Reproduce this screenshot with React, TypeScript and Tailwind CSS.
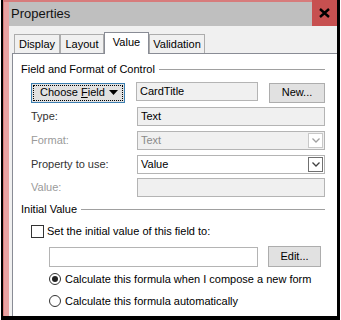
import React from "react";

const font = { fontFamily: "'Liberation Sans', Arial, sans-serif" };

const Field = ({
  className = "",
  children,
}: {
  className?: string;
  children?: React.ReactNode;
}) => (
  <div
    className={`h-[19px] border border-[#b4b4b4] bg-[#f0f0f0] px-[3px] flex items-center leading-none ${className}`}
  >
    {children}
  </div>
);

const Arrow = ({ light }: { light?: boolean }) => (
  <div
    className={`ml-auto w-[15px] h-[15px] border flex items-center justify-center bg-white ${
      light ? "border-[#c8c8c8]" : "border-[#707070]"
    }`}
  >
    <svg width="8" height="5" viewBox="0 0 8 5">
      <path
        d="M0.5 0.5 L4 4 L7.5 0.5"
        fill="none"
        stroke={light ? "#a0a0a0" : "#404040"}
        strokeWidth="1.3"
      />
    </svg>
  </div>
);

const Button = ({ label, className = "" }: { label: string; className?: string }) => (
  <div
    className={`h-[20px] border border-[#adadad] bg-[#e1e1e1] flex items-center justify-center ${className}`}
  >
    {label}
  </div>
);

const Tab = ({ label, width, active }: { label: string; width: string; active?: boolean }) => (
  <div
    className={`${width} flex items-center justify-center border border-b-0 ${
      active
        ? "h-[22px] bg-white border-[#898c95] relative -mb-px z-10"
        : "h-[19px] bg-[#f0f0f0] border-[#acacac]"
    }`}
  >
    <span className={active ? "-mt-[3px]" : ""}>{label}</span>
  </div>
);

const Radio = ({ checked }: { checked?: boolean }) => (
  <div className="w-[12px] h-[12px] shrink-0 rounded-full border border-[#333] bg-white flex items-center justify-center">
    {checked && <div className="w-[6px] h-[6px] rounded-full bg-[#222]" />}
  </div>
);

export default function App() {
  return (
    <div
      className="w-[341px] h-[320px] bg-white flex text-[#000] text-[11px] whitespace-nowrap"
      style={font}
    >
      <div className="w-px bg-white" />
      <div className="w-[2px] bg-black" />
      <div className="flex-1 flex flex-col">
        <div className="flex-1 flex flex-col border-t-2 border-l border-[#d77c7c]">
          <div className="flex-1 flex flex-col border-l-[5px] border-[#e8a2a2]">
            {/* title bar */}
            <div className="h-[24px] bg-[#bfbfbf] flex items-center relative">
              <span className="text-[13px] pl-[2px] text-[#111]">Properties</span>
              <div className="absolute right-0 -top-[2px] w-[25px] h-[26px] bg-[#c75050] flex items-center justify-center">
                <svg width="11" height="10" viewBox="0 0 11 10">
                  <path d="M1 1 L10 9 M10 1 L1 9" stroke="#000" strokeWidth="2.4" />
                </svg>
              </div>
            </div>
            {/* body */}
            <div className="flex-1 bg-[#f0f0f0] flex flex-col pl-[3px] pt-[7px]">
              <div className="flex items-end pl-[2px] h-[20px]">
                <Tab label="Display" width="w-[46px]" />
                <Tab label="Layout" width="w-[44px]" />
                <Tab label="Value" width="w-[45px]" active />
                <Tab label="Validation" width="w-[56px]" />
              </div>
              <div className="flex-1 bg-white border-l border-t border-[#898c95] pl-[8px] pr-[12px] pt-[8px]">
                <div className="flex items-center gap-[4px] h-[14px]">
                  <span>Field and Format of Control</span>
                  <div className="flex-1 h-px bg-[#a0a0a0]" />
                </div>
                <div className="pl-[10px] mt-[5px] flex flex-col">
                  <div className="flex items-center h-[23px]">
                    <div className="w-[94px] h-[20px] border border-[#3c7fb1] bg-[#e1e1e1] p-px">
                      <div className="w-full h-full border border-dotted border-black flex items-center pl-[6px] pr-[4px]">
                        <span>
                          Choose <span className="underline">F</span>ield
                        </span>
                        <svg className="ml-auto" width="9" height="5" viewBox="0 0 9 5">
                          <path d="M0 0 H9 L4.5 5 Z" fill="#000" />
                        </svg>
                      </div>
                    </div>
                    <Field className="ml-[11px] w-[122px] -mt-[2px]">CardTitle</Field>
                    <Button label="New..." className="ml-auto w-[56px]" />
                  </div>
                  <div className="flex items-center h-[24px]">
                    <span className="w-[106px] text-[#333]">Type:</span>
                    <Field className="flex-1">Text</Field>
                  </div>
                  <div className="flex items-center h-[24px]">
                    <span className="w-[106px] text-[#9a9a9a]">Format:</span>
                    <Field className="flex-1 border-[#a9c3de] text-[#8a8a8a] pr-px">
                      Text
                      <Arrow light />
                    </Field>
                  </div>
                  <div className="flex items-center h-[24px]">
                    <span className="w-[106px] text-[#333]">Property to use:</span>
                    <Field className="flex-1 bg-white border-[#b4b4b4] pr-px">
                      Value
                      <Arrow />
                    </Field>
                  </div>
                  <div className="flex items-center h-[22px]">
                    <span className="w-[106px] text-[#9a9a9a]">Value:</span>
                    <Field className="flex-1 border-[#a9c3de]" />
                  </div>
                </div>
                <div className="flex items-center gap-[4px] h-[14px] mt-[4px]">
                  <span>Initial Value</span>
                  <div className="flex-1 h-px bg-[#a0a0a0]" />
                </div>
                <div className="pl-[10px] flex flex-col">
                  <div className="flex items-center h-[20px] mt-[5px] gap-[3px]">
                    <div className="w-[13px] h-[13px] border border-[#333] bg-white" />
                    <span>Set the initial value of this field to:</span>
                  </div>
                  <div className="flex items-center pl-[18px] mt-[5px] h-[21px]">
                    <div className="w-[209px] h-[20px] border border-[#b4b4b4] bg-white" />
                    <Button label="Edit..." className="ml-auto w-[53px] h-[21px] mr-[4px]" />
                  </div>
                  <div className="flex items-center pl-[18px] mt-[3px] h-[18px] gap-[4px]">
                    <Radio checked />
                    <span>Calculate this formula when I compose a new form</span>
                  </div>
                  <div className="flex items-center pl-[18px] mt-[4px] h-[18px] gap-[4px]">
                    <Radio />
                    <span>Calculate this formula automatically</span>
                  </div>
                </div>
              </div>
            </div>
          </div>
        </div>
        <div className="h-[4px] bg-black" />
      </div>
      <div className="w-[3px] bg-black flex flex-col" />
      <div className="w-px bg-white" />
    </div>
  );
}
